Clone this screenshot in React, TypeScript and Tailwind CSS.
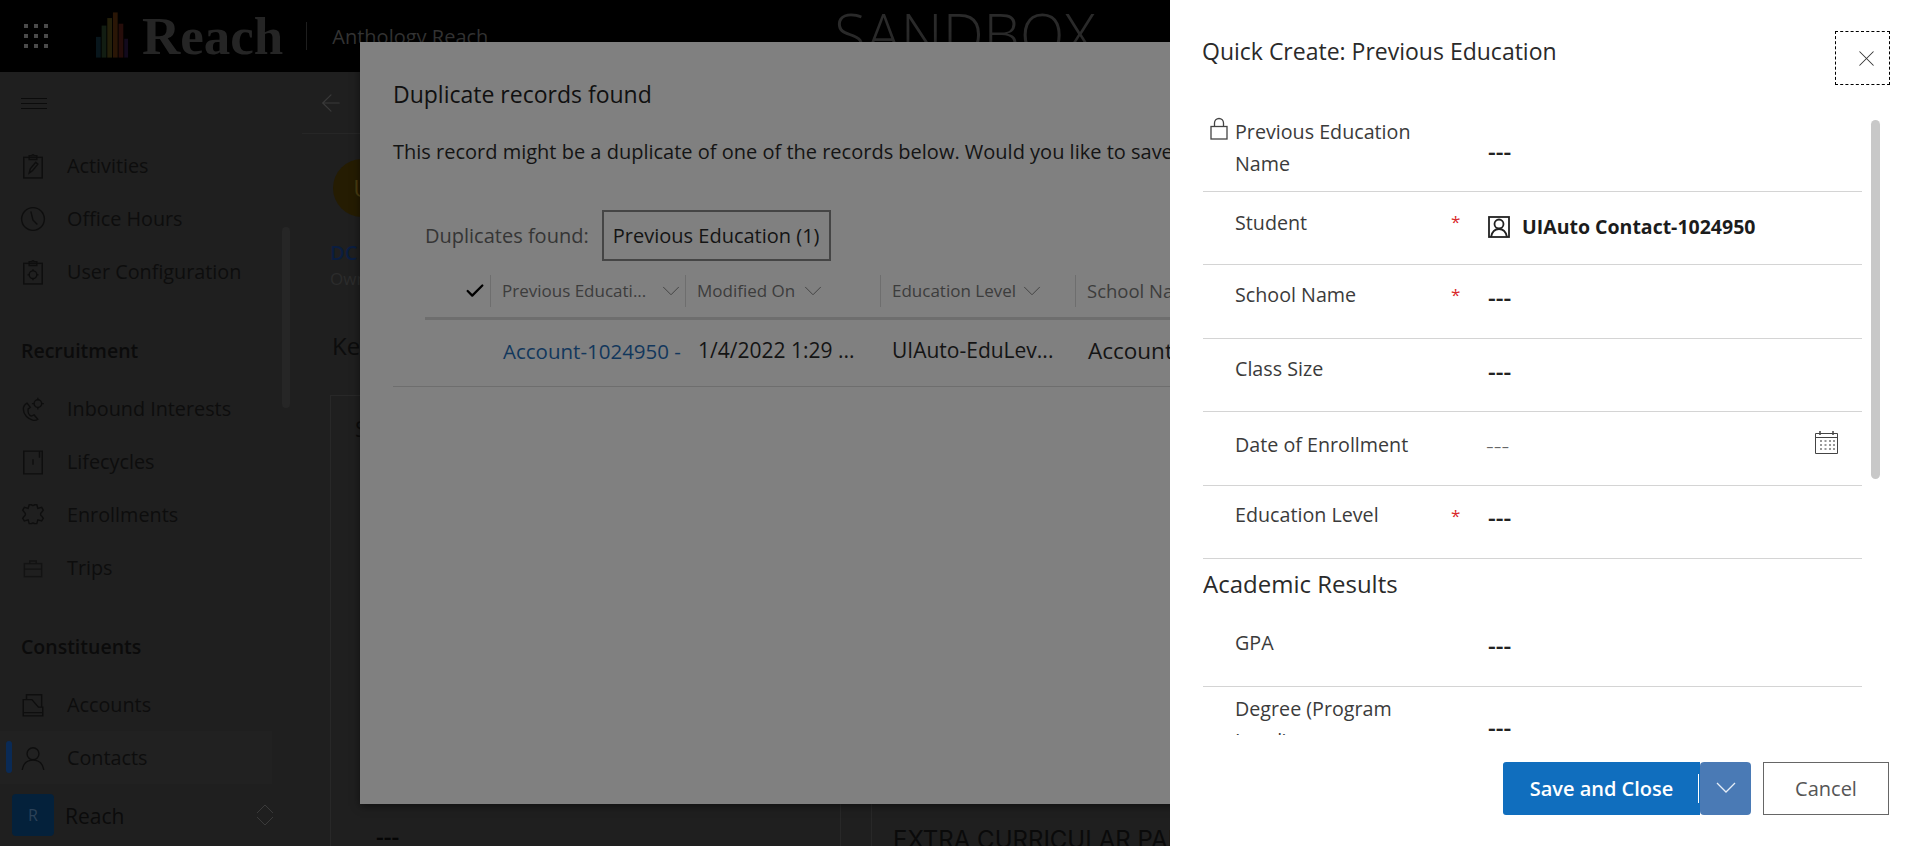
import { X, ChevronDown, Check, ArrowLeft } from "lucide-react";
import type { ReactNode } from "react";

const font = "font-['Open_Sans','Noto_Sans',sans-serif]";

function Ico({ children }: { children: ReactNode }) {
  return (
    <svg viewBox="0 0 24 24" fill="none" stroke="#0e0e0e" strokeWidth="1.3" className="w-[26px] h-[26px] shrink-0">
      {children}
    </svg>
  );
}

const navIcons: Record<string, ReactNode> = {
  Activities: <Ico><rect x="3.500" y="4" width="17" height="19" /><path d="M8.500 4V2.500h2.500a1 1 0 0 1 2 0h2.500V6h-7z" /><path d="M8.500 18.500l1-4 5-6 2 1.800-5 6z" /></Ico>,
  "Office Hours": <Ico><circle cx="12" cy="12" r="10.500" /><path d="M10 5l2 8 4 4" /></Ico>,
  "User Configuration": <Ico><rect x="3.500" y="4" width="17" height="19" /><path d="M8.500 4V2.500h2.500a1 1 0 0 1 2 0h2.500V6h-7z" /><circle cx="12" cy="14.500" r="3.500" /><path d="M12 9.500v1.500M12 18v1.500M7 14.500h1.500M15.500 14.500H17" /></Ico>,
  "Inbound Interests": <Ico><path d="M6.500 6.500c-4.500 2.500-4.500 8-.5 12.500 3.500 3.500 8 4.500 10.500 2.500l-3.500-4-2.500 1c-2.500-1-3.500-4-3-6.500l2-1.500z" /><circle cx="16.500" cy="7" r="3.500" /><path d="M16.500 1.500v2M16.500 10.500v2M11 7h2M20 7h2" /></Ico>,
  Lifecycles: <Ico><path d="M3.500 2h17v21h-17zM18 2v6M12 9.500v5" /></Ico>,
  Enrollments: <Ico><path d="M8.500 2.500h2a2 2 0 0 0 3 0h2l1 3.500 3.500-1 1.500 2.500-1.500 2a2 2 0 0 0 0 3.500l1.500 2-1.500 2.500-3.500-1-1 3.500h-2a2 2 0 0 0-3 0h-2l-1-3.500-3.500 1-1.500-2.500 1.500-2a2 2 0 0 0 0-3.500l-1.500-2 1.500-2.500 3.500 1z" /></Ico>,
  Trips: <Ico><rect x="4" y="8" width="16" height="12" stroke="#131313" /><path d="M9 8V5.500h6V8M4 13h16" stroke="#131313" /></Ico>,
  Accounts: <Ico><path d="M6 7V2.500h14V14M3 7h8l6 7h4v8H3zM3 19h18" /></Ico>,
  Contacts: <Ico><circle cx="12" cy="8" r="5.500" /><path d="M2 23c1-6 4.500-9 10-9s9 3 10 9" /></Ico>,
};

function NavItem({ label, active }: { label: string; active?: boolean }) {
  return (
    <div className={`h-[53px] flex items-center pl-[20px] relative w-[272px] ${active ? "bg-[#212121]" : ""}`}>
      {active && <div className="absolute left-[6px] top-[10px] w-[6px] h-[32px] rounded-sm bg-[#0a2a55]" />}
      {navIcons[label]}
      <span className="ml-[21px] text-[19.8px] text-[#0d0d0d] whitespace-nowrap">{label}</span>
    </div>
  );
}

function Sidebar() {
  return (
    <aside className="w-[302px] shrink-0 relative">
      <div className="h-[62px] flex flex-col justify-center gap-[4px] pl-[21px]">
        <div className="w-[26px] h-px bg-[#0b0b0b]" />
        <div className="w-[26px] h-px bg-[#0b0b0b]" />
        <div className="w-[26px] h-px bg-[#0b0b0b]" />
      </div>
      <div className="absolute left-[282px] top-[155px] w-[8px] h-[181px] rounded bg-[#262626]" />
      <nav className="pt-[5px]">
        <NavItem label="Activities" />
        <NavItem label="Office Hours" />
        <NavItem label="User Configuration" />
        <div className="mt-[26px] h-[53px] flex items-center pl-[21px] text-[19.5px] font-semibold text-[#0b0b0b]">Recruitment</div>
        <div className="mt-[5px]">
          <NavItem label="Inbound Interests" />
          <NavItem label="Lifecycles" />
          <NavItem label="Enrollments" />
          <NavItem label="Trips" />
        </div>
        <div className="mt-[26px] h-[53px] flex items-center pl-[21px] text-[19.5px] font-semibold text-[#0b0b0b]">Constituents</div>
        <div className="mt-[5px]">
          <NavItem label="Accounts" />
          <NavItem label="Contacts" active />
        </div>
      </nav>
      <div className="mt-[10px] ml-[12px] w-[262px] flex items-center">
        <div className="w-[42px] h-[42px] shrink-0 rounded-[4px] bg-[#04213b] flex items-center justify-center text-[16px] text-[#2c4258]">R</div>
        <span className="ml-[11px] mt-[3px] text-[21px] text-[#0b0b0b]">Reach</span>
        <svg viewBox="0 0 18 22" fill="none" stroke="#3a3a3a" strokeWidth="1" className="ml-auto w-[18px] h-[22px]">
          <path d="M1 9l8-8 8 8M1 13l8 8 8-8" />
        </svg>
      </div>
    </aside>
  );
}

function Header() {
  return (
    <header className="h-[72px] bg-black flex items-center shrink-0 relative overflow-hidden">
      <div className="ml-[24px] grid grid-cols-3 gap-[6px] w-[24px] shrink-0">
        {Array.from({ length: 9 }).map((_, i) => (
          <div key={i} className="w-[4px] h-[4px] bg-[#4a4a4a]" />
        ))}
      </div>
      <svg viewBox="0 0 34 48" className="ml-[48px] w-[32px] h-[48px] -mt-[2px] shrink-0">
        <rect x="0" y="26" width="5" height="22" fill="#08161c" />
        <rect x="6" y="14" width="5" height="34" fill="#121d12" />
        <rect x="12" y="6" width="5" height="42" fill="#24200a" />
        <rect x="18" y="0" width="5" height="48" fill="#2a1606" />
        <rect x="24" y="12" width="5" height="36" fill="#260d0a" />
        <rect x="30" y="28" width="4" height="20" fill="#120a1c" />
      </svg>
      <span className="ml-[14px] font-['Liberation_Serif',serif] font-bold text-[53px] leading-none text-[#252525]">Reach</span>
      <div className="ml-[23px] w-px h-[28px] bg-[#1e1e1e]" />
      <span className="ml-[25px] mt-[2px] text-[20px] text-[#333333] whitespace-nowrap">Anthology Reach</span>
      <span className="ml-[346px] -mt-[4px] text-[58px] font-light leading-none text-[#2a2a2a] whitespace-nowrap">SANDBOX</span>
    </header>
  );
}

function Main() {
  return (
    <main className="flex-1 flex flex-col min-w-0">
      <div className="h-[62px] shrink-0 border-b border-[#262626] flex items-center pl-[15px]">
        <ArrowLeft className="w-[28px] h-[28px] text-[#3a3a3a]" strokeWidth={1} />
      </div>
      <div className="flex-1 flex flex-col pl-[28px] min-h-0">
        <div className="ml-[3px] mt-[25px] w-[58px] h-[58px] rounded-full bg-[#251c02] flex items-center justify-center text-[24px] text-[#4a3c10]">U</div>
        <div className="mt-[21px] text-[20px] leading-[30px] font-semibold text-[#0a1d40]">DC</div>
        <div className="text-[17px] leading-[22px] text-[#2c2c2c]">Owner</div>
        <div className="mt-[40px] ml-[2px] text-[24px] leading-[32px] text-[#0c0c0c]">Key</div>
        <div className="mt-[33px] flex-1 flex min-h-0">
          <div className="w-[511px] border border-b-0 border-[#282828] pl-[24px] flex flex-col">
            <div className="mt-[16px] text-[22px] leading-[32px] text-[#0c0c0c]">S</div>
            <div className="mt-auto ml-[21px] text-[24px] leading-[20px] font-semibold text-[#050505]">---</div>
          </div>
          <div className="ml-[30px] flex-1 border-l border-[#282828] pl-[21px] flex flex-col">
            <div className="mt-auto mb-[-12px] text-[24px] leading-[36px] text-[#0a0a0a] font-['Inter',sans-serif] whitespace-nowrap">EXTRA CURRICULAR PARTICIPATION</div>
          </div>
        </div>
      </div>
    </main>
  );
}

const columns = [
  { label: "Previous Educati...", chev: "ml-[10px]", size: "text-[17px]" },
  { label: "Modified On", chev: "ml-[3px]", size: "text-[17px]" },
  { label: "Education Level", chev: "ml-[1px]", size: "text-[17px]" },
  { label: "School Name", chev: "ml-[3px]", size: "text-[18.5px]" },
];

function DuplicateModal() {
  return (
    <div className="absolute left-[360px] top-[42px] w-[1200px] h-[762px] bg-[#808080] shadow-[0_2px_8px_rgba(0,0,0,0.5)] overflow-hidden pl-[33px] text-[#141414]">
      <h2 className="mt-[34px] text-[23px] leading-[36px] text-[#101010]">Duplicate records found</h2>
      <p className="mt-[25px] text-[20px] leading-[30px] whitespace-nowrap">
        This record might be a duplicate of one of the records below. Would you like to save anyway?
      </p>
      <div className="mt-[43px] ml-[32px] flex items-center">
        <span className="text-[20px] text-[#353535]">Duplicates found:</span>
        <div className="ml-[13px] w-[229px] h-[51px] border-2 border-[#454545] flex items-center justify-center text-[20px] text-[#141414] whitespace-nowrap">
          Previous Education (1)
        </div>
      </div>
      <div className="ml-[32px] mt-[5px] w-[1000px] h-[54px] pb-[2px] border-b-[3px] border-[#6e6e6e] flex items-center">
        <div className="w-[66px] h-[32px] shrink-0 flex items-center justify-end pr-[4px] border-r border-[#6e6e6e]">
          <Check className="w-[22px] h-[22px] text-black" strokeWidth={2.5} />
        </div>
        {columns.map((c) => (
          <div key={c.label} className={`w-[195px] shrink-0 h-[32px] pl-[11px] flex items-center ${c.size} text-[#3c3c3c] border-r border-[#6e6e6e] whitespace-nowrap`}>
            {c.label}
            <ChevronDown className={`${c.chev} w-[30px] h-[30px] shrink-0 text-[#444444]`} strokeWidth={0.8} />
          </div>
        ))}
      </div>
      <div className="h-[67px] pb-[4px] border-b border-[#6e6e6e] -mr-[33px] flex items-center text-[21px] whitespace-nowrap">
        <div className="w-[110px] shrink-0" />
        <div className="w-[195px] shrink-0 text-[20.5px] text-[#12375c]">Account-1024950 -</div>
        <div className="w-[194px] shrink-0">1/4/2022 1:29 ...</div>
        <div className="w-[196px] shrink-0">UIAuto-EduLev...</div>
        <div className="text-[22.5px]">Account-1024950</div>
      </div>
    </div>
  );
}

const rows = [
  { label: "Student", required: true, value: "student", h: "h-[73px]", lp: "pt-[15px]", vp: "pt-[20px]" },
  { label: "School Name", required: true, value: "---", h: "h-[74px]", lp: "pt-[14px]", vp: "pt-[16px]" },
  { label: "Class Size", value: "---", h: "h-[73px]", lp: "pt-[14px]", vp: "pt-[16px]" },
  { label: "Date of Enrollment", value: "date", h: "h-[74px]", lp: "pt-[17px]", vp: "pt-[17px]" },
  { label: "Education Level", required: true, value: "---", h: "h-[73px]", lp: "pt-[13px]", vp: "pt-[15px]" },
];

function RowValue({ value }: { value: string }) {
  if (value === "student") {
    return (
      <div className="flex items-center text-[19.5px] font-bold text-[#1c1c1c] whitespace-nowrap">
        <svg viewBox="0 0 22 22" fill="none" stroke="#222222" strokeWidth="1.8" className="w-[22px] h-[22px] mr-[12px]">
          <rect x="1" y="1" width="20" height="20" />
          <circle cx="11" cy="8" r="4.500" />
          <path d="M3 21c1-5 4-8 8-8s7 3 8 8" />
        </svg>
        UIAuto Contact-1024950
      </div>
    );
  }
  if (value === "date") {
    return (
      <div className="flex items-center justify-between w-[353px] -ml-[2px] text-[24px] leading-[32px] text-[#666666]">
        <span className="font-light">---</span>
        <svg viewBox="0 0 25 25" fill="none" stroke="#444444" className="w-[25px] h-[25px] -mt-[7px]">
          <path d="M1.500 4.500h22v20h-22zM1.500 8.500h22" />
          <path d="M6 2v4M19 2v4" strokeWidth="1.500" />
          <path d="M6 12h2M10.500 12h2M15 12h2M19 12h2M6 16h2M10.500 16h2M15 16h2M19 16h2M6 20h2M10.500 20h2M15 20h2M19 20h2" strokeWidth="1.500" stroke="#777777" />
        </svg>
      </div>
    );
  }
  return <div className="text-[24px] leading-[32px] font-semibold text-[#222222]">{value}</div>;
}

function FormRow({ row }: { row: (typeof rows)[number] }) {
  return (
    <div className={`${row.h} flex border-b border-[#d4d4d4]`}>
      <div className={`w-[253px] shrink-0 pl-[32px] ${row.lp} text-[19.7px] leading-[32px] text-[#3b3b3b] whitespace-nowrap relative`}>
        {row.label}
        {row.required && <span className="absolute left-[248px] top-[14px] text-[17px] text-[#d9292b]">*</span>}
      </div>
      <div className={`${row.vp} pl-[32px]`}>
        <RowValue value={row.value} />
      </div>
    </div>
  );
}

function QuickCreatePanel() {
  return (
    <div className="absolute left-[1170px] top-0 w-[750px] h-[846px] bg-white flex flex-col">
      <div className="h-[116px] shrink-0 relative pl-[32px]">
        <h2 className="pt-[33px] text-[23px] leading-[36px] text-[#2a2a2a] whitespace-nowrap">Quick Create: Previous Education</h2>
        <button className="absolute left-[665px] top-[31px] w-[55px] h-[54px] border border-dashed border-black flex items-center justify-center">
          <X className="ml-[7px] w-[27px] h-[27px] text-[#333333]" strokeWidth={0.9} />
        </button>
      </div>
      <div className="flex-1 min-h-0 flex">
        <div className="ml-[33px] w-[659px] h-[619px] overflow-hidden">
          <div className="h-[76px] flex border-b border-[#d4d4d4]">
            <div className="w-[285px] shrink-0 text-[19.7px] leading-[32px] text-[#3b3b3b] flex">
              <svg viewBox="0 0 18 23" fill="none" stroke="#444444" strokeWidth="1.300" className="w-[18px] h-[23px] ml-[7px] mr-[7px] mt-[1px] shrink-0">
                <rect x="1" y="9.500" width="16" height="12.500" />
                <path d="M4.500 9.500V6a4.500 4.500 0 0 1 9 0v3.500" />
              </svg>
              <span className="w-[200px]">Previous Education Name</span>
            </div>
            <div className="pt-[19px]">
              <RowValue value="---" />
            </div>
          </div>
          {rows.map((r) => (
            <FormRow key={r.label} row={r} />
          ))}
          <h3 className="h-[54px] pt-[7px] text-[24px] leading-[36px] text-[#2a2a2a]">Academic Results</h3>
          <FormRow row={{ label: "GPA", value: "---", h: "h-[74px]", lp: "pt-[14px]", vp: "pt-[16px]" }} />
          <div className="flex h-[100px]">
            <div className="w-[285px] shrink-0 pl-[32px] pt-[6px] text-[19.7px] leading-[32px] text-[#3b3b3b]">
              Degree (Program<br />Level)
            </div>
            <div className="pt-[24px]">
              <RowValue value="---" />
            </div>
          </div>
        </div>
        <div className="ml-[9px] w-[9px] h-[359px] mt-[4px] rounded-full bg-[#c8c8c8]" />
      </div>
      <div className="absolute left-[333px] top-[762px] flex">
        <button className="relative w-[197px] h-[53px] rounded-l-[3px] bg-[#106ebe] text-white text-[20px] font-semibold">
          Save and Close
          <span className="absolute right-[1px] top-[12px] w-px h-[29px] bg-white" />
        </button>
        <button className="w-[51px] h-[53px] rounded-[4px] bg-[#4a7ab5] flex items-center justify-center">
          <svg viewBox="0 0 20 11" fill="none" stroke="#e6eef8" strokeWidth="1.300" className="w-[20px] h-[11px] -mt-[3px]">
            <path d="M1 1l9 9 9-9" />
          </svg>
        </button>
        <button className="ml-[12px] w-[126px] h-[53px] border border-[#666666] text-[20px] text-[#555555]">Cancel</button>
      </div>
    </div>
  );
}

export default function App() {
  return (
    <div className={`${font} relative w-full h-[846px] overflow-hidden bg-[#1f1f1f] flex flex-col`}>
      <Header />
      <div className="flex-1 flex min-h-0">
        <Sidebar />
        <Main />
      </div>
      <DuplicateModal />
      <QuickCreatePanel />
    </div>
  );
}
